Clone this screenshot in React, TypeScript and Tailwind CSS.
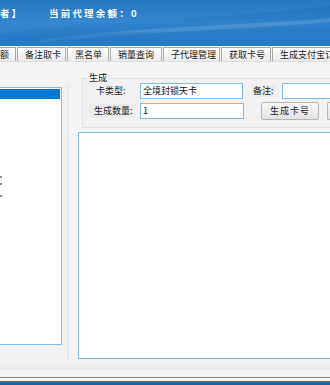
import React from 'react'

const font = { fontFamily: '"Noto Sans CJK SC", "Noto Sans", sans-serif' }

const tabs = [
  { label: '额', w: 'w-[16px]', first: true },
  { label: '备注取卡', w: 'w-[49px]' },
  { label: '黑名单', w: 'w-[42px]' },
  { label: '销量查询', w: 'w-[52px]' },
  { label: '子代理管理', w: 'w-[57px]' },
  { label: '获取卡号', w: 'w-[50px]' },
  { label: '生成支付宝订单', w: 'w-[80px]' },
]

const Tab: React.FC<{ label: string; w: string; first?: boolean }> = ({ label, w, first }) => (
  <div
    className={`${w} h-[15px] shrink-0 overflow-hidden whitespace-nowrap border border-[#a9a9a9] border-b-0 bg-gradient-to-b from-white to-[#e9e9e9] text-[9px] leading-[14px] text-[#222] ${
      first ? 'border-l-0 pl-0' : 'pl-[7px]'
    }`}
  >
    {label}
  </div>
)

export default function App() {
  return (
    <div className="w-[330px] h-[385px] overflow-hidden flex flex-col bg-[#f4f4f4]" style={font}>
      {/* header */}
      <div className="relative h-[46px] shrink-0 overflow-hidden bg-gradient-to-b from-[#1d6cb6] via-[#2f83cc] to-[#2576c2]">
        <svg className="absolute inset-0" width="330" height="46" viewBox="0 0 330 46">
          <path d="M0 34 C90 20 200 22 330 6 L330 0 L0 0 Z" fill="#3c8fd8" opacity="0.35" />
          <path d="M40 40 C140 26 240 26 330 18 L330 22 C240 30 140 32 40 42 Z" fill="#ffffff" opacity="0.12" />
          <path d="M0 46 L0 38 C120 30 230 34 330 26 L330 46 Z" fill="#2a7bc6" opacity="0.5" />
        </svg>
        <div className="relative flex pt-[7px] text-[9.5px] font-bold leading-[12px] text-white">
          <span className="tracking-[2px]">者】</span>
          <span className="ml-[26px] tracking-[2.2px]">当前代理余额：0</span>
        </div>
      </div>

      {/* tab strip */}
      <div className="h-[16px] shrink-0 flex gap-[1px] overflow-hidden pt-[1px] bg-[#f4f4f4] border-b border-[#dcdcdc]">
        {tabs.map((t) => (
          <Tab key={t.label} {...t} />
        ))}
      </div>

      {/* body */}
      <div className="flex-1 flex pt-[5px]">
        {/* left column */}
        <div className="w-[69px] shrink-0 flex flex-col pt-[15px]">
          <div className="h-[277px] flex flex-col border-r border-[#e4e4e4] bg-[#f1f1f1] pr-[6px] pt-[5px]">
            <div className="relative h-[258px] border border-l-0 border-[#84bde6] bg-white">
              <div className="h-[10px] mt-[1px] mr-[1px] bg-[#0078d7]" />
              {/* clipped row glyphs at the left edge */}
              <div className="absolute left-0 top-[88px] flex flex-col gap-[5px]">
                <div className="h-[2px] w-[2px] bg-[#8a8a8a]" />
                <div className="h-[2px] w-[2px] bg-[#8a8a8a]" />
                <div className="mt-[5px] h-[2px] w-[2px] bg-[#8a8a8a]" />
              </div>
            </div>
          </div>
        </div>

        {/* right column */}
        <div className="flex-1 flex flex-col pl-[9px]">
          {/* group box */}
          <div className="relative ml-[4px] mt-[11px] h-[50px] border border-r-0 border-[#e0e0e0] bg-[#f1f1f1]">
            <span className="absolute left-[5px] top-[-7px] bg-[#f4f4f4] px-[1px] text-[9px] leading-[11px] text-[#222]">
              生成
            </span>
            <div className="flex items-center pt-[4px]">
              <span className="ml-[13px] w-[37px] text-[9px] leading-[12px] text-[#222]">卡类型:</span>
              <div className="ml-[7px] h-[16px] w-[103px] border border-[#83bbe8] bg-white pl-[2px] text-[9px] leading-[14px] text-[#111]">
                全境封锁天卡
              </div>
              <span className="ml-[9px] bg-[#ebebeb] px-[1px] text-[9px] leading-[12px] text-[#222]">备注:</span>
              <div className="ml-[7px] h-[16px] flex-1 border border-r-0 border-[#83bbe8] bg-white" />
            </div>
            <div className="flex items-center pt-[3px]">
              <span className="ml-[6px] w-[45px] bg-[#ebebeb] pl-[5px] text-[9px] leading-[14px] text-[#222]">生成数量:</span>
              <div className="ml-[6px] h-[16px] w-[104px] border border-[#83bbe8] bg-white pl-[2px] text-[9px] leading-[14px] text-[#111]">
                1
              </div>
              <div className="ml-[17px] h-[18px] w-[58px] rounded-[2px] border border-[#b4b4b4] bg-gradient-to-b from-[#f7f7f7] to-[#e2e2e2] text-center text-[9px] leading-[16px] tracking-[1px] text-[#222]">
                生成卡号
              </div>
              <div className="ml-[8px] h-[18px] flex-1 rounded-l-[2px] border border-r-0 border-[#b4b4b4] bg-gradient-to-b from-[#f7f7f7] to-[#e2e2e2]" />
            </div>
          </div>
          {/* output */}
          <div className="mt-[4px] h-[227px] border border-r-0 border-[#86bde5] bg-white" />
        </div>
      </div>

      {/* bottom */}
      <div className="h-[4px] shrink-0 bg-[#f1f1f1]" />
      <div className="h-[7px] shrink-0 bg-[#ebebeb]" />
      <div className="h-[7px] shrink-0 bg-[#f6f6f6]" />
      <div className="h-[1px] shrink-0 bg-[#4a8fcc]" />
      <div className="h-[3px] shrink-0 bg-white" />
      <div className="h-[4px] shrink-0 bg-gradient-to-b from-[#2e74b8] to-[#1c5c9c]" />
    </div>
  )
}
